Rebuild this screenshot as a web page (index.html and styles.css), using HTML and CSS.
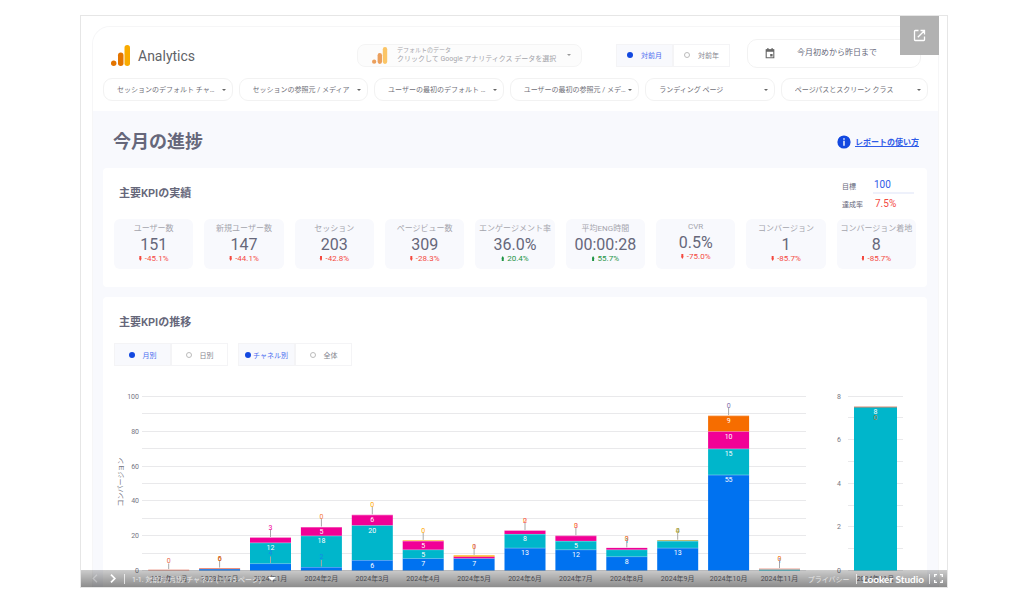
FILE: index.html
```html
<!DOCTYPE html>
<html lang="ja">
<head>
<meta charset="utf-8">
<title>Analytics - 今月の進捗</title>
<link rel="stylesheet" href="styles.css">
</head>
<body>
<main class="embed">
  <button class="open-btn" aria-label="新しいタブで開く">
    <svg width="13" height="13" viewBox="0 0 13 13" fill="none" stroke="#fff" stroke-width="1.3"><path d="M5.5 1.5H2.2q-.7 0-.7.7v8.6q0 .7.7.7h8.6q.7 0 .7-.7V7.500M7.500 1.500h4v4M11.300 1.700 4.800 8.200"/></svg>
  </button>
  <div class="report">
    <header class="head">
      <div class="topbar">
        <div class="brand">
          <svg width="20" height="21" viewBox="0 0 20 21"><rect x="13.500" y="0" width="5.500" height="21" rx="2.700" fill="#f9ab00"/><rect x="7" y="7.500" width="5.500" height="13.500" rx="2.700" fill="#e37400"/><circle cx="2.700" cy="18.200" r="2.700" fill="#e37400"/></svg>
          <span>Analytics</span>
        </div>
        <button class="source">
          <svg width="16" height="17" viewBox="0 0 20 21"><rect x="13.500" y="0" width="5.500" height="21" rx="2.700" fill="#fbc566"/><rect x="7" y="7.500" width="5.500" height="13.500" rx="2.700" fill="#eb9f5c"/><circle cx="2.700" cy="18.200" r="2.700" fill="#eb9f5c"/></svg>
          <span class="source-text"><small>デフォルトのデータ</small><span>クリックして Google アナリティクス データを選択</span></span>
          <i class="caret"></i>
        </button>
        <div class="segment">
          <label><input type="radio" name="cmp" checked><span>対前月</span></label>
          <label><input type="radio" name="cmp"><span>対前年</span></label>
        </div>
        <button class="date">
          <svg width="10" height="11" viewBox="0 0 10 11"><path d="M1.200 1.800h7.600v7.900H1.200z" fill="none" stroke="#666" stroke-width="1.100"/><path d="M1 1.500h8v2.300H1zM2.300 0h1.200v2H2.300zM6.500 0h1.200v2H6.500zM5.200 6h2.400v2.400H5.200z" fill="#666"/></svg>
          <span>今月初めから昨日まで</span>
        </button>
      </div>
      <div class="filters">
        <div class="chip"><select aria-label="チャネル"><option>セッションのデフォルト チャ…</option></select><i class="caret"></i></div>
        <div class="chip"><select aria-label="参照元"><option>セッションの参照元 / メディア</option></select><i class="caret"></i></div>
        <div class="chip"><select aria-label="最初のチャネル"><option>ユーザーの最初のデフォルト …</option></select><i class="caret"></i></div>
        <div class="chip"><select aria-label="最初の参照元"><option>ユーザーの最初の参照元 / メデ…</option></select><i class="caret"></i></div>
        <div class="chip"><select aria-label="ランディング"><option>ランディング ページ</option></select><i class="caret"></i></div>
        <div class="chip"><select aria-label="ページパス"><option>ページパスとスクリーン クラス</option></select><i class="caret"></i></div>
      </div>
    </header>

    <div class="title-row">
      <h1>今月の進捗</h1>
      <a class="help" href="#help">
        <svg width="14" height="14" viewBox="0 0 14 14"><circle cx="7" cy="7" r="6.600" fill="#1248e0"/><path d="M6.300 3.200h1.400v1.500H6.300zM6.300 5.800h1.400v5H6.300z" fill="#fff"/></svg>
        <span>レポートの使い方</span>
      </a>
    </div>

    <section class="card kpis">
      <div class="card-head">
        <h2>主要KPIの実績</h2>
        <div class="goal">
          <label for="goal">目標</label><input id="goal" type="text" value="100">
          <span>達成率</span><output>7.5%</output>
        </div>
      </div>
      <div class="tiles">
        <div class="tile"><span>ユーザー数</span><b>151</b><em class="down">-45.1%</em></div>
        <div class="tile"><span>新規ユーザー数</span><b>147</b><em class="down">-44.1%</em></div>
        <div class="tile"><span>セッション</span><b>203</b><em class="down">-42.8%</em></div>
        <div class="tile"><span>ページビュー数</span><b>309</b><em class="down">-28.3%</em></div>
        <div class="tile"><span>エンゲージメント率</span><b>36.0%</b><em class="up">20.4%</em></div>
        <div class="tile"><span>平均ENG時間</span><b>00:00:28</b><em class="up">55.7%</em></div>
        <div class="tile latin"><span>CVR</span><b>0.5%</b><em class="down">-75.0%</em></div>
        <div class="tile"><span>コンバージョン</span><b>1</b><em class="down">-85.7%</em></div>
        <div class="tile"><span>コンバージョン着地</span><b>8</b><em class="down">-85.7%</em></div>
      </div>
    </section>

    <section class="card trend">
      <h2>主要KPIの推移</h2>
      <div class="switches">
        <div class="segment">
          <label><input type="radio" name="unit" checked><span>月別</span></label>
          <label><input type="radio" name="unit"><span>日別</span></label>
        </div>
        <div class="segment">
          <label class="tight"><input type="radio" name="scope" checked><span>チャネル別</span></label>
          <label><input type="radio" name="scope"><span>全体</span></label>
        </div>
      </div>
      <svg class="chart" id="chart" viewBox="0 0 824 212" role="img" aria-label="コンバージョンの推移"></svg>
    </section>
  </div>

  <footer class="toolbar">
    <button class="faded" aria-label="前のページ"><svg width="6" height="9" viewBox="0 0 6 9" fill="none" stroke="#fff" stroke-width="1.300"><path d="M5 .7 1.200 4.500 5 8.300"/></svg></button>
    <button class="next" aria-label="次のページ"><svg width="6" height="9" viewBox="0 0 6 9" fill="none" stroke="#fff" stroke-width="1.700"><path d="M1 .7 4.800 4.500 1 8.300"/></svg></button>
    <i class="rule"></i>
    <button class="pager"><span>1-1. 対前月/月別/チャネル (1 / 15 ページ)</span><i class="caret light"></i></button>
    <a class="privacy" href="#privacy">プライバシー</a>
    <i class="rule"></i>
    <a class="studio" href="#studio">Looker Studio</a>
    <i class="rule"></i>
    <button class="full" aria-label="全画面"><svg width="9" height="9" viewBox="0 0 9 9" fill="none" stroke="#fff" stroke-width="1.300"><path d="M.7 3V.7H3M6 .7h2.300V3M8.300 6v2.300H6M3 8.300H.7V6"/></svg></button>
  </footer>
</main>
<script src="chart.js"></script>
</body>
</html>
```

FILE: styles.css
```css
* { box-sizing: border-box; }

body {
  margin: 0;
  padding: 15px 76px 26px 80px;
  background: #fff;
  color: #66677a;
  font-family: Roboto, "Noto Sans CJK JP", sans-serif;
  font-size: 8px;
}

button, input, select { font: inherit; color: inherit; }
button { border: 0; background: none; padding: 0; display: flex; align-items: center; }
h1, h2 { margin: 0; font-weight: 600; }

.embed {
  position: relative;
  border: 1px solid #e6e6e6;
  padding: 10px 8px 0 11px;
  overflow: hidden;
}

.open-btn {
  position: absolute;
  top: 0;
  right: 8px;
  width: 39px;
  height: 39px;
  justify-content: center;
  background: #b2b2b2;
}

.report {
  border: 1px solid #f6f6f7;
  border-bottom: 0;
  border-radius: 18px 18px 0 0;
  background: #f8f9fd;
  overflow: hidden;
}

.head { background: #fff; padding: 11px 10px 10px; }

.topbar { display: flex; align-items: center; height: 30px; padding-right: 7px; }

.brand { display: flex; align-items: center; gap: 7px; padding: 5px 0 0 8px; font-size: 14px; color: #5f6368; }

.caret {
  flex: none;
  border: 2px solid transparent;
  border-top-color: #666;
  border-bottom: 0;
}
.caret.light { border-width: 4px; border-top-color: #fff; border-bottom: 0; }

.source {
  width: 225px;
  height: 23px;
  margin: 4px 34px 0 auto;
  padding: 0 10px 0 14px;
  gap: 9px;
  border: 1px solid #f4f4f4;
  border-radius: 8px;
  background: #fcfcfc;
  color: #a5a5ab;
}
.source .caret { border-top-color: #999; }
.source-text { flex: 1; display: grid; text-align: left; font-size: 7px; line-height: 10px; white-space: nowrap; }
.source-text small { font-size: 6px; line-height: 8px; }

.segment { display: flex; }
.segment label {
  display: flex;
  align-items: center;
  justify-content: center;
  gap: 8px;
  width: 57px;
  height: 23px;
  border: 1px solid #f4f4f6;
  background: #fff;
  color: #85858f;
  font-size: 7px;
}
.segment label.tight { gap: 2px; }
.segment label:has(:checked) { background: #f8f9fd; color: #4a6cf0; }
.segment input {
  appearance: none;
  width: 6px;
  height: 6px;
  margin: 0;
  border: 1px solid #bbb;
  border-radius: 50%;
}
.segment input:checked { border: 0; background: #1248e0; }
.topbar .segment { margin-top: 4px; }

.date {
  width: 174px;
  height: 29px;
  margin-left: 17px;
  padding: 0 17px;
  gap: 22px;
  border: 1px solid #f2f2f2;
  border-radius: 10px;
}
.date span { padding-bottom: 3px; }

.filters {
  display: grid;
  grid-template-columns: repeat(5, 22fr) 25fr;
  gap: 6px;
  margin-top: 10px;
}
.chip {
  display: flex;
  align-items: center;
  height: 23px;
  padding: 0 6px 0 13px;
  border: 1px solid #f2f2f2;
  border-radius: 9px;
}
.chip select {
  flex: 1;
  min-width: 0;
  appearance: none;
  border: 0;
  padding: 0;
  background: none;
  color: #707078;
  font-size: 7px;
}

.title-row { display: flex; align-items: center; justify-content: space-between; height: 57px; padding: 0 19px 0 20px; }
h1 { font-size: 18px; }
.help { display: flex; align-items: center; gap: 4px; padding-top: 4px; color: #2f5be8; font-weight: 600; }

.card { margin: 0 11px 0 10px; border-radius: 4px; background: #fff; }
h2 { font-size: 11px; line-height: 16px; }

.kpis { padding: 9px 11px 18px; }
.card-head { display: flex; justify-content: space-between; padding: 0 2px 0 5px; }
.card-head h2 { margin-top: 9px; }
.goal {
  display: grid;
  grid-template-columns: 31px 41px;
  row-gap: 1px;
  align-items: center;
  font-size: 7px;
}
.goal input {
  width: 100%;
  height: 17px;
  border: 0;
  border-bottom: 2px solid #eef1fb;
  padding: 0 1px 0 1px;
  color: #2f5be8;
  font-size: 10px;
}
.goal output { padding-left: 2px; color: #f4493f; font-size: 10px; line-height: 17px; }

.tiles { display: grid; grid-template-columns: repeat(9, 1fr); gap: 11px; margin-top: 7px; }
.tile {
  display: flex;
  flex-direction: column;
  align-items: center;
  height: 50px;
  padding-top: 4px;
  border-radius: 6px;
  background: #f8f9fd;
  white-space: nowrap;
}
.tile.latin { padding-top: 2px; }
.tile span { line-height: 12px; color: #a5a5ad; }
.tile b { font-size: 16px; font-weight: 400; line-height: 19px; }
.tile em { display: flex; align-items: center; gap: 3px; font-style: normal; line-height: 9px; }
.tile em::before { content: ""; width: 3px; height: 5px; background: currentColor; }
.down { color: #f4493f; }
.up { color: #1e9445; }
.down::before { clip-path: polygon(17% 0, 83% 0, 83% 50%, 100% 50%, 50% 100%, 0 50%, 17% 50%); }
.up::before { clip-path: polygon(50% 0, 100% 50%, 83% 50%, 83% 100%, 17% 100%, 17% 50%, 0 50%); }

.trend { margin-top: 10px; padding-top: 18px; border-radius: 4px 4px 0 0; }
.trend h2 { margin-left: 16px; }
.switches { display: flex; gap: 10px; padding: 12px 11px 9px; }

.chart { display: block; width: 100%; font-size: 7px; fill: #757582; }
.chart .grid { stroke: #e9e9eb; }
.chart .stem { stroke: #a8a8a8; }
.chart .mid { text-anchor: middle; }
.chart .end { text-anchor: end; }
.chart .inside { fill: #fff; }
.chart .month { fill: #707078; }

.toolbar {
  position: absolute;
  left: 0;
  right: 0;
  bottom: 0;
  display: flex;
  align-items: center;
  height: 17px;
  padding: 0 4px 0 11px;
  background: linear-gradient(rgba(0, 0, 0, .2), rgba(0, 0, 0, .45));
  color: #fff;
  white-space: nowrap;
}
.faded { opacity: .3; }
.next { margin: 0 8px 0 12px; }
.rule { width: 1px; height: 10px; background: rgba(255, 255, 255, .7); }
.pager { gap: 7px; margin: 0 auto 0 7px; font-size: 7px; }
.pager span { opacity: .75; }
.toolbar a { color: inherit; text-decoration: none; }
.privacy { margin-right: 6px; font-size: 7px; opacity: .7; }
.studio { margin: 0 5px 0 6px; font-family: Lato, sans-serif; font-size: 10px; font-weight: 700; }
.full { margin-left: 4px; }
```

FILE: chart.js
```js
const BLUE = '#0072f0', TEAL = '#00b6cb', PINK = '#f10096', ORANGE = '#f66d00';
const RED = '#ea8a78', AMBER = '#ffa800', OLIVE = '#a8a03c', PURPLE = '#7c6fae';
const BASE = 195, LEFT_UNIT = 1.74, RIGHT_UNIT = 21.8;

// stack: [value, colour, label]; marks: [axis value of text centre, text, colour]
const months = [
  { name: '2023年11月', stack: [[0.5, RED]], marks: [[5.5, '0', '#e8684a']] },
  { name: '2023年12月', stack: [[0.8, BLUE], [0.6, RED]], marks: [[7, '0', ORANGE], [7, '6', '#c0602a']] },
  { name: '2024年1月', stack: [[4, BLUE], [12, TEAL, 12], [3, PINK]], marks: [[25, '3', PINK]], inner: [9.5, '4', 4] },
  { name: '2024年2月', stack: [[2, BLUE], [18, TEAL, 18], [5, PINK, 5]], marks: [[31, '0', '#f47a3a']], inner: [7.5, '2', 2] },
  { name: '2024年3月', stack: [[6, BLUE, 6], [20, TEAL, 20], [6, PINK, 6]], marks: [[38, '0', AMBER]] },
  { name: '2024年4月', stack: [[7, BLUE, 7], [5, TEAL, 5], [5, PINK, 5], [0.3, AMBER]], marks: [[23, '0', AMBER]] },
  { name: '2024年5月', stack: [[7, BLUE, 7], [1, PINK], [0.7, AMBER]], marks: [[14, '0', ORANGE], [14, '1', '#c8788c']] },
  { name: '2024年6月', stack: [[13, BLUE, 13], [8, TEAL, 8], [2, PINK]], marks: [[29, '0', AMBER], [29, '2', '#f4608a']] },
  { name: '2024年7月', stack: [[12, BLUE, 12], [5, TEAL, 5], [3, PINK]], marks: [[26, '0', AMBER], [26, '3', '#f4608a']] },
  { name: '2024年8月', stack: [[8, BLUE, 8], [4, TEAL], [1, PINK]], marks: [[18.5, '0', AMBER], [17.5, '1', TEAL], [18.5, '3', '#e8706a']] },
  { name: '2024年9月', stack: [[13, BLUE, 13], [4, TEAL], [0.4, OLIVE]], marks: [[23, '0', OLIVE], [23, '4', OLIVE]] },
  { name: '2024年10月', stack: [[55, BLUE, 55], [15, TEAL, 15], [10, PINK, 10], [9, ORANGE, 9]], marks: [[95, '0', PURPLE]] },
  { name: '2024年11月', stack: [[0.6, TEAL], [0.5, RED]], marks: [[7, '0', ORANGE], [6, '1', '#6a90c8']] }
];

let out = '';
const text = (x, y, cls, value, fill) => {
  out += `<text x="${x}" y="${y}" class="${cls}"${fill ? ` fill="${fill}"` : ''}>${value}</text>`;
};
const line = (x1, y1, x2, y2, cls) => {
  out += `<line x1="${x1}" y1="${y1}" x2="${x2}" y2="${y2}" class="${cls}"/>`;
};
const rect = (x, y, w, h, fill) => {
  out += `<rect x="${x}" y="${y}" width="${w}" height="${h}" fill="${fill}"/>`;
};

for (let v = 0; v <= 100; v += 10) {
  const y = Math.round(BASE - v * LEFT_UNIT) + 0.5;
  line(39, y, 703, y, 'grid');
  if (v % 20 === 0) text(36, y + 2, 'end', v);
}
for (let v = 0; v <= 8; v += 1) {
  const y = Math.round(BASE - v * RIGHT_UNIT) + 0.5;
  line(745, y, 800, y, 'grid');
  if (v % 2 === 0) text(738, y + 2, 'end', v);
}
out += '<text class="mid" transform="translate(20 107) rotate(-90)">コンバージョン</text>';

months.forEach((m, i) => {
  const cx = 65.7 + 50.9 * i;
  let total = 0;
  m.stack.forEach(([value, fill, label]) => {
    total += value;
    const y = BASE + 0.5 - total * LEFT_UNIT;
    const h = value * LEFT_UNIT;
    rect(cx - 20.5, y, 41, h, fill);
    if (value >= 2) rect(cx - 20.5, y, 41, 0.5, 'rgba(255,255,255,.6)');
    if (label) text(cx, y + Math.min(7.5, h / 2 + 3), 'mid inside', label);
  });
  const stem = (from, to) => line(cx, BASE - from * LEFT_UNIT + 3, cx, BASE - to * LEFT_UNIT, 'stem');
  stem(m.marks[0][0], total);
  m.marks.forEach(([v, label, fill]) => text(cx, BASE - v * LEFT_UNIT + 3, 'mid', label, fill));
  if (m.inner) {
    stem(m.inner[0], m.inner[2]);
    text(cx, BASE - m.inner[0] * LEFT_UNIT + 2, 'mid', m.inner[1], '#1687e6');
  }
  text(cx, 206, 'mid month', m.name);
});

rect(751, 32, 43, 163.5, TEAL);
rect(751, 31.5, 43, 1, '#d98a72');
text(772.500, 45, 'mid', '0', '#b8803c');
text(772.500, 39, 'mid inside', '8');
text(772.500, 206, 'mid month', '2024年11月');

document.getElementById('chart').innerHTML = out;
```
